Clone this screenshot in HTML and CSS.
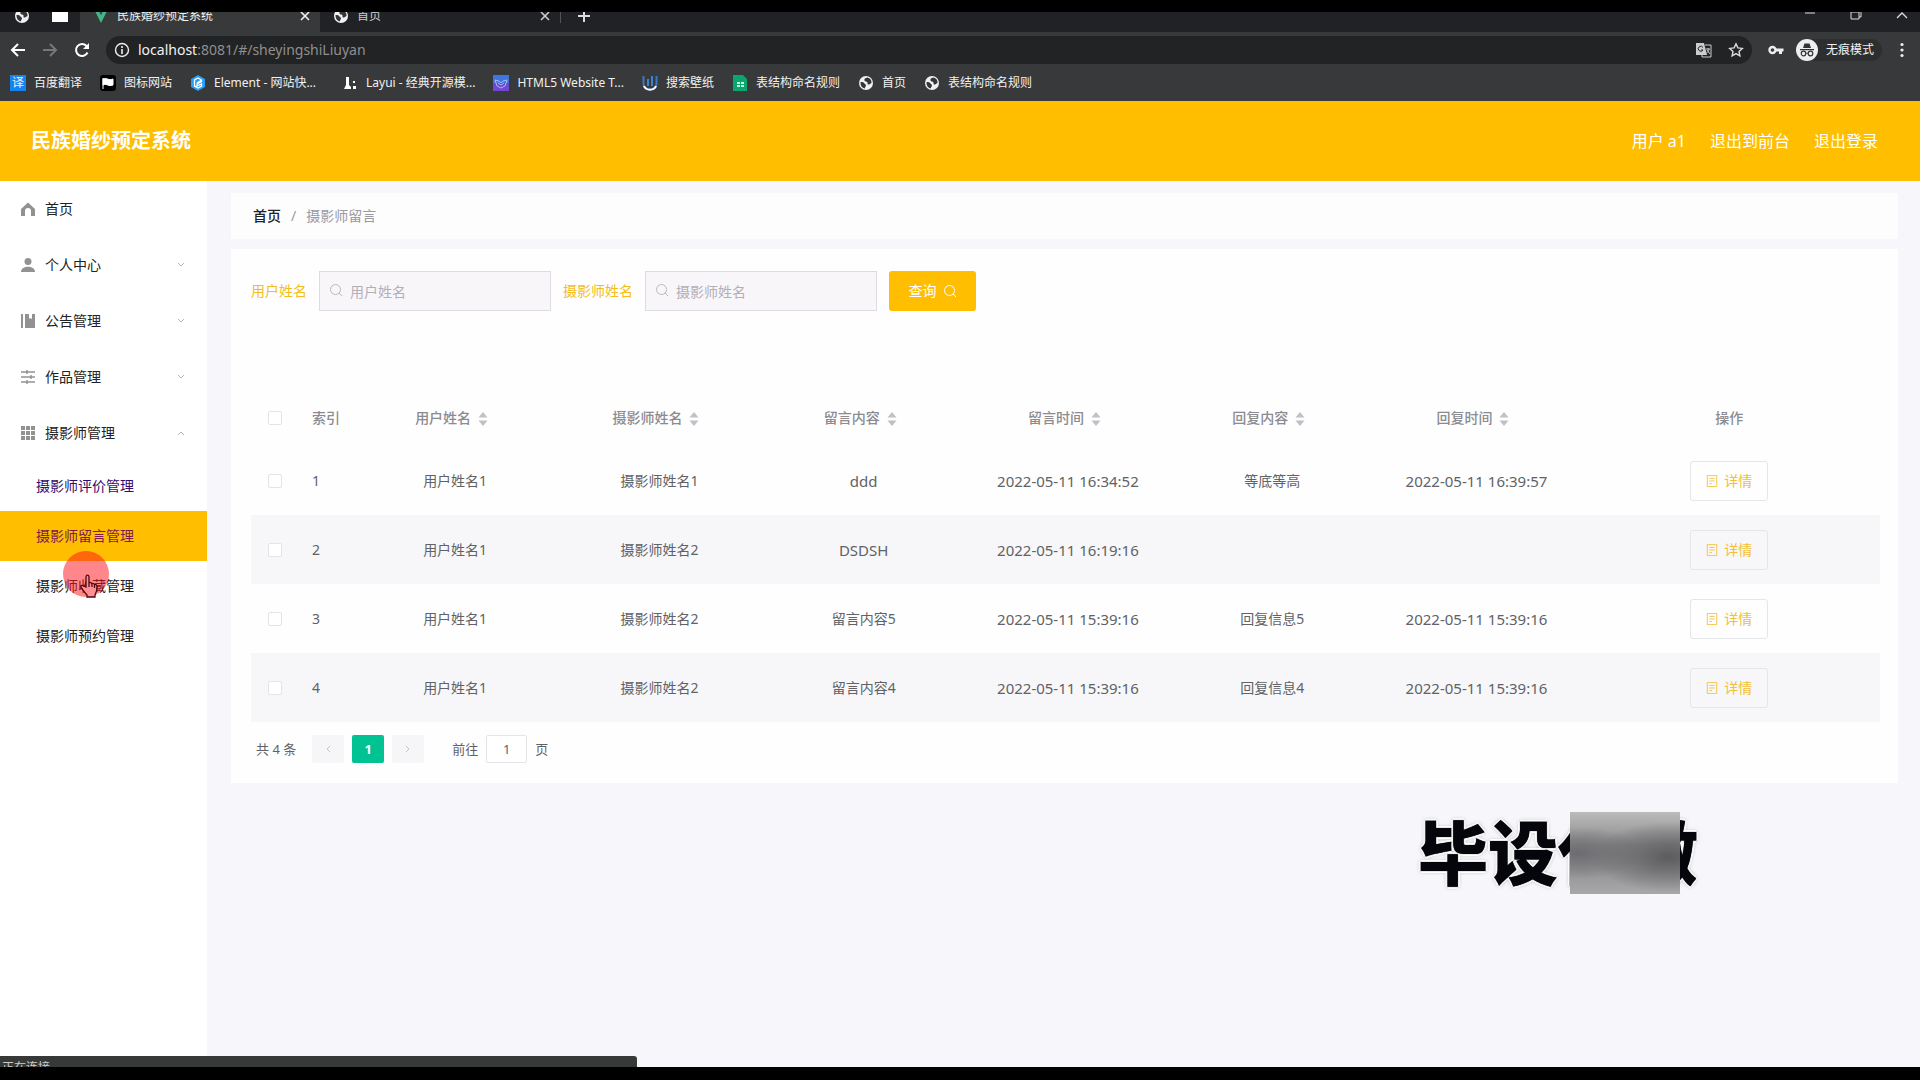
FILE: index.html
```html
<!DOCTYPE html>
<html lang="zh-CN">
<head>
  <meta charset="UTF-8" />
  <meta name="viewport" content="width=device-width, initial-scale=1.0"/>
  <title>民族婚纱预定系统</title>
  <link rel="stylesheet" href="styles.css">
</head>
<body>
  <!-- Shared icons -->
  <svg class="sprite" aria-hidden="true">
    <symbol id="globe" viewBox="0 0 16 16">
      <circle cx="8" cy="8" r="7" fill="#f1f1f1"/>
      <path d="M9.500 2.500C7 2.800 6 4 6.500 5.500c.4 1.200 2.500.8 3 2 .3.800-.5 1.500.5 2 1 .4 2-.5 3.500-1.500.3-3-1.500-5-4-5.500zM2.500 7c2 0 3.500.3 4 1.500.3 1 1.800.8 1.500 2-.2 1-1 1.500-1.200 3C4 13 2.300 10.500 2.500 7z" fill="#333538"/>
    </symbol>
    <symbol id="close" viewBox="0 0 12 12"><path d="M2 2l8 8M10 2l-8 8" stroke="currentColor" stroke-width="1.600"/></symbol>
    <symbol id="search" viewBox="0 0 14 14"><circle cx="6.500" cy="6.500" r="5" fill="none" stroke="currentColor"/><path d="M10 10l3 3" stroke="currentColor"/></symbol>
    <symbol id="down" viewBox="0 0 12 12"><path d="M3 4l3 3 3-3" fill="none" stroke="currentColor"/></symbol>
    <symbol id="sort" viewBox="0 0 10 14"><path d="M5 0l4.500 5.500h-9zM5 14L.5 8.500h9z" fill="#c0c0c6"/></symbol>
    <symbol id="doc" viewBox="0 0 14 14"><path d="M1.500.5h11v13h-11zM4 4h6M4 7h6M4 10h3" fill="none" stroke="currentColor"/></symbol>
  </svg>

  <!-- Browser window -->
  <div class="browser">
    <div class="tabs">
      <button class="pinned" aria-label="首页"><svg class="icon16"><use href="#globe"/></svg></button>
      <button class="pinned pinned-last" aria-label="新标签"><svg class="icon16" viewBox="0 0 16 16"><path d="M0 1h16v13H0z" fill="#fff"/></svg></button>
      <div class="tab active">
        <svg class="icon16" viewBox="0 0 16 16"><path d="M1 1h4l3 6 3-6h4L8 15z" fill="#41b883"/><path d="M5 1h2l1 3 1-3h2L8 7z" fill="#35495e"/></svg>
        <span>民族婚纱预定系统</span>
        <button aria-label="关闭"><svg class="icon12"><use href="#close"/></svg></button>
      </div>
      <div class="tab">
        <svg class="icon16"><use href="#globe"/></svg>
        <span>首页</span>
        <button aria-label="关闭"><svg class="icon12"><use href="#close"/></svg></button>
      </div>
      <button class="new-tab" aria-label="新建标签页"><svg class="icon14" viewBox="0 0 14 14"><path d="M7 1v12M1 7h12" stroke="#ddd" stroke-width="2"/></svg></button>
      <div class="window-buttons">
        <button aria-label="最小化"><svg class="icon12" viewBox="0 0 12 12"><path d="M1 3h10" stroke="#ddd"/></svg></button>
        <button aria-label="还原"><svg class="icon12" viewBox="0 0 12 12"><path d="M1 2h8v7H1zM9 7h2V0" fill="none" stroke="#ddd"/></svg></button>
        <button aria-label="关闭窗口"><svg class="icon12" viewBox="0 0 12 12"><path d="M1 8l5-5 5 5" fill="none" stroke="#ddd" stroke-width="1.300"/></svg></button>
      </div>
    </div>

    <div class="toolbar">
      <button aria-label="后退"><svg class="icon16" viewBox="0 0 16 16"><path d="M15 8H2M8 2L2 8l6 6" fill="none" stroke="#fff" stroke-width="2"/></svg></button>
      <button aria-label="前进"><svg class="icon16" viewBox="0 0 16 16"><path d="M1 8h13M8 2l6 6-6 6" fill="none" stroke="#777" stroke-width="2"/></svg></button>
      <button aria-label="刷新"><svg class="icon16" viewBox="0 0 16 16"><path d="M13.500 10.500A6 6 0 1 1 12.500 4L14 5.500" fill="none" stroke="#fff" stroke-width="2"/><path d="M15 1v6H9z" fill="#fff"/></svg></button>
      <div class="address">
        <svg class="icon16" viewBox="0 0 16 16"><circle cx="8" cy="8" r="6.500" fill="none" stroke="#eee" stroke-width="1.400"/><path d="M8 7v5M8 4v2" stroke="#eee" stroke-width="1.600"/></svg>
        <span class="url">localhost<span class="path">:8081/#/sheyingshiLiuyan</span></span>
        <svg class="icon16" viewBox="0 0 16 16"><path d="M0 1h8l3 12H0z" fill="#ccc"/><path d="M9 3h6v12H6v-2" fill="none" stroke="#ccc"/><path d="M7 5.500A2.500 2.500 0 1 0 7 8H5" fill="none" stroke="#222"/><path d="M10 7h4M12 6v1M13 7c0 2-1 3-2.500 4M11 8l3 4" fill="none" stroke="#ccc"/></svg>
        <svg class="icon16" viewBox="0 0 16 16"><path d="M8 1.800l1.900 4.100 4.400.5-3.300 3 .9 4.400L8 11.600l-3.900 2.200.9-4.400-3.300-3 4.400-.5z" fill="none" stroke="#ddd" stroke-width="1.400"/></svg>
      </div>
      <button aria-label="密码"><svg class="icon16" viewBox="0 0 16 16"><circle cx="4.500" cy="8" r="3" fill="none" stroke="#eee" stroke-width="2.400"/><path d="M7 6.500h8.500v3H14V12h-3V9.500H7z" fill="#eee"/></svg></button>
      <div class="incognito">
        <svg class="icon22" viewBox="0 0 22 22"><circle cx="11" cy="11" r="11" fill="#eee"/><path d="M7 9l1.500-4.500h5L15 9zM4 10h14v1.200H4z" fill="#333"/><path d="M10 14.500c.7-.5 1.300-.5 2 0" stroke="#333" fill="none"/><circle cx="7.500" cy="14.500" r="2.300" fill="none" stroke="#333" stroke-width="1.200"/><circle cx="14.500" cy="14.500" r="2.300" fill="none" stroke="#333" stroke-width="1.200"/></svg>
        <span>无痕模式</span>
      </div>
      <button aria-label="更多"><svg class="icon16" viewBox="0 0 16 16" fill="#eee"><circle cx="8" cy="2.500" r="1.600"/><circle cx="8" cy="8" r="1.600"/><circle cx="8" cy="13.500" r="1.600"/></svg></button>
    </div>

    <div class="bookmarks">
      <a href="#"><span class="fanyi">译</span>百度翻译</a>
      <a href="#"><svg class="icon16" viewBox="0 0 16 16"><rect width="16" height="16" rx="3" fill="#000"/><path d="M3 3v11M3 4c4-2 5 2 10 0v6c-5 2-6-2-10 0z" fill="#fff" stroke="#fff"/></svg>图标网站</a>
      <a href="#"><svg class="icon16" viewBox="0 0 16 16"><path d="M8 0l7 4v8l-7 4-7-4V4z" fill="#2a9df4"/><path d="M11.500 5L8 3 4.500 5v6L8 13l3.500-2V9L7 11V9l4.500-2.500zM7 8l4-2.500" fill="none" stroke="#fff" stroke-width="1.300"/></svg>Element - 网站快...</a>
      <a href="#" class="layui"><svg class="icon16" viewBox="0 0 16 16"><path d="M4 2h3v8l2 2v2H2l2-4zM11 6h2v2h-2zM11 11h3v3h-3z" fill="#fff"/></svg>Layui - 经典开源模...</a>
      <a href="#"><svg class="icon16" viewBox="0 0 16 16"><path d="M0 0h16v8H0z" fill="#3f75dc"/><path d="M0 8h16v8H0z" fill="#7047cf"/><path d="M2 5l4 1 2 2 2-2 4-1-2 6-4 2-4-2zM5 8l3 2 3-2" fill="none" stroke="#a9b5fb"/></svg>HTML5 Website T...</a>
      <a href="#"><svg class="icon16" viewBox="0 0 16 16"><path d="M1.500 1v8c0 7 13 7 13 0V1" fill="none" stroke="#3e78bd" stroke-width="2"/><path d="M2 11c2 5 10 5 12 0" fill="none" stroke="#fff" stroke-width="2"/><path d="M6 4v7M10 1v10" stroke="#3c83d6" stroke-width="2"/></svg>搜索壁纸</a>
      <a href="#"><svg class="icon16" viewBox="0 0 16 16"><path d="M1 0h10l4 4v12H1z" fill="#09a66d"/><path d="M5 7h3v2H5zM9 7h3v2H9zM5 10h3v2H5zM9 10h3v2H9z" fill="#c8f4e2"/></svg>表结构命名规则</a>
      <a href="#"><svg class="icon16"><use href="#globe"/></svg>首页</a>
      <a href="#"><svg class="icon16"><use href="#globe"/></svg>表结构命名规则</a>
    </div>
  </div>

  <header class="header">
    <h1>民族婚纱预定系统</h1>
    <nav>
      <span>用户 a1</span>
      <a href="#">退出到前台</a>
      <a href="#">退出登录</a>
    </nav>
  </header>

  <div class="container">
    <nav class="sidebar">
      <ul>
        <li><a href="#"><svg class="icon14" viewBox="0 0 14 14"><path d="M0 7l7-6.500L14 7v7h-4V9a3 3 0 0 0-6 0v5H0z"/></svg>首页</a></li>
        <li><a href="#"><svg class="icon14" viewBox="0 0 14 14"><circle cx="7" cy="3.500" r="3.500"/><path d="M0 14c0-7 14-7 14 0z"/></svg>个人中心<svg class="arrow"><use href="#down"/></svg></a></li>
        <li><a href="#"><svg class="icon14" viewBox="0 0 14 14"><path d="M0 0h2v14H0zM4 0h4v5l1-1 2 1V0h3v14H4z"/></svg>公告管理<svg class="arrow"><use href="#down"/></svg></a></li>
        <li><a href="#"><svg class="icon14" viewBox="0 0 14 14"><path d="M0 2h14M0 7h14M0 12h14M6 0v4M10 5v4M6 10v4" stroke="#929292" stroke-width="1.400"/></svg>作品管理<svg class="arrow"><use href="#down"/></svg></a></li>
        <li>
          <a href="#"><svg class="icon14" viewBox="0 0 14 14"><path d="M0 0h4v4H0zM5 0h4v4H5zM10 0h4v4h-4zM0 5h4v4H0zM5 5h4v4H5zM10 5h4v4h-4zM0 10h4v4H0zM5 10h4v4H5zM10 10h4v4h-4z"/></svg>摄影师管理<svg class="arrow open"><use href="#down"/></svg></a>
          <ul class="submenu">
            <li><a href="#" class="seen">摄影师评价管理</a></li>
            <li><a href="#" class="seen current">摄影师留言管理</a></li>
            <li><a href="#">摄影师收藏管理</a></li>
            <li><a href="#">摄影师预约管理</a></li>
          </ul>
        </li>
      </ul>
    </nav>

    <main class="main-content">
      <div class="breadcrumb"><a href="#">首页</a><span>/</span><span>摄影师留言</span></div>

      <section class="card">
        <form class="filters">
          <label for="userName">用户姓名</label>
          <div class="field"><svg class="icon14"><use href="#search"/></svg><input type="text" id="userName" placeholder="用户姓名"></div>
          <label for="photographer">摄影师姓名</label>
          <div class="field"><svg class="icon14"><use href="#search"/></svg><input type="text" id="photographer" placeholder="摄影师姓名"></div>
          <button type="button">查询 <svg class="icon14"><use href="#search"/></svg></button>
        </form>

        <table>
          <colgroup>
            <col class="col-check"><col class="col-index"><col><col><col><col><col><col><col class="col-action">
          </colgroup>
          <thead>
            <tr>
              <th><input type="checkbox" aria-label="全选"></th>
              <th class="index">索引</th>
              <th>用户姓名<svg class="sort"><use href="#sort"/></svg></th>
              <th>摄影师姓名<svg class="sort"><use href="#sort"/></svg></th>
              <th>留言内容<svg class="sort"><use href="#sort"/></svg></th>
              <th>留言时间<svg class="sort"><use href="#sort"/></svg></th>
              <th>回复内容<svg class="sort"><use href="#sort"/></svg></th>
              <th>回复时间<svg class="sort"><use href="#sort"/></svg></th>
              <th>操作</th>
            </tr>
          </thead>
          <tbody>
            <tr>
              <td><input type="checkbox" aria-label="选择 1"></td>
              <td class="index">1</td>
              <td>用户姓名1</td>
              <td>摄影师姓名1</td>
              <td class="latin">ddd</td>
              <td class="latin">2022-05-11 16:34:52</td>
              <td>等底等高</td>
              <td class="latin">2022-05-11 16:39:57</td>
              <td><button><svg class="icon12"><use href="#doc"/></svg>详情</button></td>
            </tr>
            <tr>
              <td><input type="checkbox" aria-label="选择 2"></td>
              <td class="index">2</td>
              <td>用户姓名1</td>
              <td>摄影师姓名2</td>
              <td class="latin">DSDSH</td>
              <td class="latin">2022-05-11 16:19:16</td>
              <td></td>
              <td></td>
              <td><button><svg class="icon12"><use href="#doc"/></svg>详情</button></td>
            </tr>
            <tr>
              <td><input type="checkbox" aria-label="选择 3"></td>
              <td class="index">3</td>
              <td>用户姓名1</td>
              <td>摄影师姓名2</td>
              <td>留言内容5</td>
              <td class="latin">2022-05-11 15:39:16</td>
              <td>回复信息5</td>
              <td class="latin">2022-05-11 15:39:16</td>
              <td><button><svg class="icon12"><use href="#doc"/></svg>详情</button></td>
            </tr>
            <tr>
              <td><input type="checkbox" aria-label="选择 4"></td>
              <td class="index">4</td>
              <td>用户姓名1</td>
              <td>摄影师姓名2</td>
              <td>留言内容4</td>
              <td class="latin">2022-05-11 15:39:16</td>
              <td>回复信息4</td>
              <td class="latin">2022-05-11 15:39:16</td>
              <td><button><svg class="icon12"><use href="#doc"/></svg>详情</button></td>
            </tr>
          </tbody>
        </table>

        <div class="pagination">
          <span class="total">共 4 条</span>
          <button aria-label="上一页" disabled><svg class="icon12 prev"><use href="#down"/></svg></button>
          <button class="page-on">1</button>
          <button aria-label="下一页" disabled><svg class="icon12 next"><use href="#down"/></svg></button>
          <label for="page">前往</label>
          <input type="text" id="page" value="1">
          <span>页</span>
        </div>
      </section>
    </main>
  </div>

  <!-- Floating layers -->
  <div class="watermark">毕设代做<div class="mosaic"></div></div>
  <div class="pointer">
    <svg viewBox="0 0 18 24"><path d="M6 13V3c0-2.500 3-2.500 3 0v6c1-1 2.500-.5 2.800.8 1-.8 2.300-.3 2.600.9 1.200-.5 2.600.2 2.600 1.800 0 5-.5 6-2 8.500v2H7v-2C5 19 3 16 1 13.500 0 12 2 10.500 3.500 12zM9 9v4M12 10v3M14.500 11v3" fill="#ff8f92" stroke="#4a0810" stroke-width="1.300"/></svg>
  </div>
  <footer class="bottom"><div class="status">正在连接...</div></footer>
</body>
</html>
```

FILE: styles.css
```css
* {
  box-sizing: border-box;
}

body {
  font-family: "Noto Sans", "Noto Sans CJK SC", sans-serif;
  font-size: 14px;
  line-height: 20px;
  margin: 0;
  min-height: 100vh;
  display: flex;
  flex-direction: column;
  color: #606266;
  position: relative;
}

a {
  color: inherit;
  text-decoration: none;
}

button {
  font: inherit;
  color: inherit;
  border: 0;
  padding: 0;
  background: none;
  cursor: pointer;
}

ul {
  list-style: none;
  margin: 0;
  padding: 0;
}

svg {
  flex-shrink: 0;
}

.sprite {
  position: absolute;
  width: 0;
  height: 0;
}

.icon12 { width: 12px; height: 12px; }
.icon14 { width: 14px; height: 14px; }
.icon16 { width: 16px; height: 16px; }
.icon22 { width: 22px; height: 22px; }

/* Browser window */
.browser {
  border-top: 12px solid #000;
  background: #38393b;
  color: #f1f1f1;
  font-size: 12px;
}

.browser button {
  display: flex;
}

.tabs {
  display: flex;
  align-items: center;
  height: 20px;
  padding: 0 12px 12px 14px;
  background: #212226;
  overflow: hidden;
}

.pinned {
  margin-right: 22px;
}

.pinned-last {
  margin-right: 12px;
}

.tab {
  display: flex;
  align-items: center;
  gap: 8px;
  width: 240px;
  height: 40px;
  padding: 0 9px 0 13px;
  color: #ccc;
}

.tab.active {
  background: #38393b;
  color: #f1f1f1;
}

.tab span {
  flex: 1;
}

.new-tab {
  padding-left: 16px;
  border-left: 1px solid #555;
}

.window-buttons {
  display: flex;
  gap: 34px;
  margin-left: auto;
}

.toolbar {
  display: flex;
  align-items: center;
  height: 36px;
  padding: 0 10px;
  gap: 16px;
}

.address {
  flex: 1;
  display: flex;
  align-items: center;
  gap: 16px;
  height: 28px;
  padding: 0 8px;
  border-radius: 14px;
  background: #222324;
}

.url {
  flex: 1;
  font-size: 14px;
  margin-left: -8px;
}

.path {
  color: #8f8f8f;
}

.incognito {
  display: flex;
  align-items: center;
  gap: 8px;
  margin: 0 -4px;
  padding-right: 8px;
  border-radius: 12px;
  background: #2d2e30;
}

.bookmarks {
  display: flex;
  align-items: center;
  gap: 18px;
  height: 33px;
  padding: 0 10px 4px;
}

.bookmarks a {
  display: flex;
  align-items: center;
  gap: 8px;
}

.bookmarks .layui {
  margin-left: 8px;
}

.fanyi {
  width: 16px;
  height: 16px;
  line-height: 16px;
  text-align: center;
  background: #1683ef;
}

/* App header */
.header {
  display: flex;
  align-items: center;
  justify-content: space-between;
  height: 80px;
  padding: 0 42px 0 31px;
  background: #ffbe00;
  color: #fff;
}

.header h1 {
  margin: 0;
  font-size: 20px;
  line-height: 24px;
}

.header nav {
  display: flex;
  gap: 24px;
  font-size: 16px;
}

.container {
  display: flex;
  flex: 1;
}

.sidebar {
  width: 207px;
  flex-shrink: 0;
  background: #fff;
  color: #222;
}

.sidebar a {
  display: flex;
  align-items: center;
  gap: 10px;
  height: 56px;
  padding: 0 20px 0 21px;
}

.sidebar svg {
  fill: #929292;
}

.sidebar .arrow {
  width: 12px;
  height: 12px;
  margin-left: auto;
  color: #b5b5b5;
}

.sidebar .open {
  transform: rotate(180deg);
}

.sidebar .submenu a {
  height: 50px;
  padding-left: 36px;
}

.sidebar .seen {
  color: #350b6b;
}

.sidebar .current {
  background: #ffbe00;
  color: #7a1c4c;
}

.main-content {
  flex: 1;
  padding: 12px 22px 24px 24px;
  background: #f7f7fb;
}

.breadcrumb {
  display: flex;
  gap: 10px;
  padding: 13px 22px;
  margin-bottom: 10px;
  background: #fefdfe;
  color: #999aa3;
}

.breadcrumb a {
  color: #222;
  font-weight: 500;
}

.card {
  padding: 22px 18px 20px 20px;
  background: #fefeff;
}

.filters {
  display: flex;
  align-items: center;
  gap: 12px;
  margin-bottom: 79px;
  color: #f4bd1c;
}

.field {
  position: relative;
  width: 232px;
}

.field svg {
  position: absolute;
  left: 10px;
  top: 12px;
  color: #bbb8c0;
}

.field input {
  width: 100%;
  height: 40px;
  padding: 0 30px;
  border: 1px solid #dedce2;
  background: #f9f6fa;
  font: inherit;
}

.field input::placeholder {
  color: #b2afb7;
}

.filters button {
  display: flex;
  align-items: center;
  justify-content: center;
  gap: 6px;
  width: 87px;
  height: 40px;
  border-radius: 3px;
  background: #ffbe00;
  color: #fff;
}

table {
  width: 100%;
  table-layout: fixed;
  border-collapse: collapse;
  text-align: center;
}

.col-check { width: 48px; }
.col-index { width: 54px; }
.col-action { width: 18.5%; }

th {
  height: 56px;
  padding: 0;
  font-weight: 500;
  color: #8b8b90;
}

td {
  height: 69px;
  padding: 0;
}

.index {
  padding-left: 13px;
  text-align: left;
}

.latin {
  font-size: 15px;
}

tbody tr:nth-child(even) {
  background: #f7f7fa;
}

input[type="checkbox"] {
  appearance: none;
  display: block;
  width: 14px;
  height: 14px;
  margin: 0 auto;
  border: 1px solid #e3e4e8;
  border-radius: 2px;
  background: #fff;
}

.sort {
  width: 10px;
  height: 14px;
  margin: 0 7px;
  vertical-align: middle;
}

td button {
  display: inline-flex;
  align-items: center;
  justify-content: center;
  gap: 6px;
  width: 78px;
  height: 40px;
  border: 1px solid #e5e5ec;
  border-radius: 3px;
  color: #f3bf35;
}

.pagination {
  display: flex;
  align-items: center;
  gap: 8px;
  padding: 13px 5px 0;
  font-size: 13px;
}

.pagination .total {
  margin-right: 8px;
}

.pagination button {
  display: flex;
  align-items: center;
  justify-content: center;
  width: 32px;
  height: 28px;
  border-radius: 2px;
  background: #f6f6f8;
  color: #c6c6ca;
}

.pagination .page-on {
  background: #00c292;
  color: #fff;
  font-weight: 700;
}

.pagination label {
  margin-left: 20px;
}

.pagination input {
  width: 41px;
  height: 28px;
  border: 1px solid #e4e4e9;
  border-radius: 2px;
  background: #fff;
  color: inherit;
  font: inherit;
  text-align: center;
}

.prev { transform: rotate(90deg); }
.next { transform: rotate(-90deg); }

/* Floating layers */
.watermark {
  position: absolute;
  right: 222px;
  bottom: 186px;
  font-size: 70px;
  line-height: 82px;
  font-weight: 900;
  color: #05050c;
  text-shadow: 0 0 1px #000, 2px 0 #fff, -2px 0 #fff, 0 2px #fff, 0 -2px #fff, 0 0 4px #777;
}

.mosaic {
  position: absolute;
  top: 0;
  right: 18px;
  width: 110px;
  height: 82px;
  background:
    radial-gradient(ellipse at 90% 55%, #5c5c5e 0, rgba(92, 92, 94, 0) 55%),
    radial-gradient(ellipse at 8% 50%, #6c6c70 0, rgba(108, 108, 112, 0) 45%),
    linear-gradient(#bbb, #8c8c8e 40%, #949496 70%, #a8a8ab);
}

.pointer {
  position: absolute;
  left: 63px;
  top: 551px;
  width: 46px;
  height: 46px;
  border-radius: 50%;
  background: rgba(255, 15, 25, 0.5);
}

.pointer svg {
  position: absolute;
  left: 16px;
  top: 23px;
  width: 20px;
  height: 24px;
}

.bottom {
  position: relative;
  height: 13px;
  background: #000;
}

.status {
  position: absolute;
  left: 0;
  bottom: 100%;
  width: 637px;
  height: 11px;
  padding: 2px 2px 0;
  border-radius: 0 3px 0 0;
  overflow: hidden;
  background: #373938;
  color: #ccc;
  font-size: 12px;
}
```
